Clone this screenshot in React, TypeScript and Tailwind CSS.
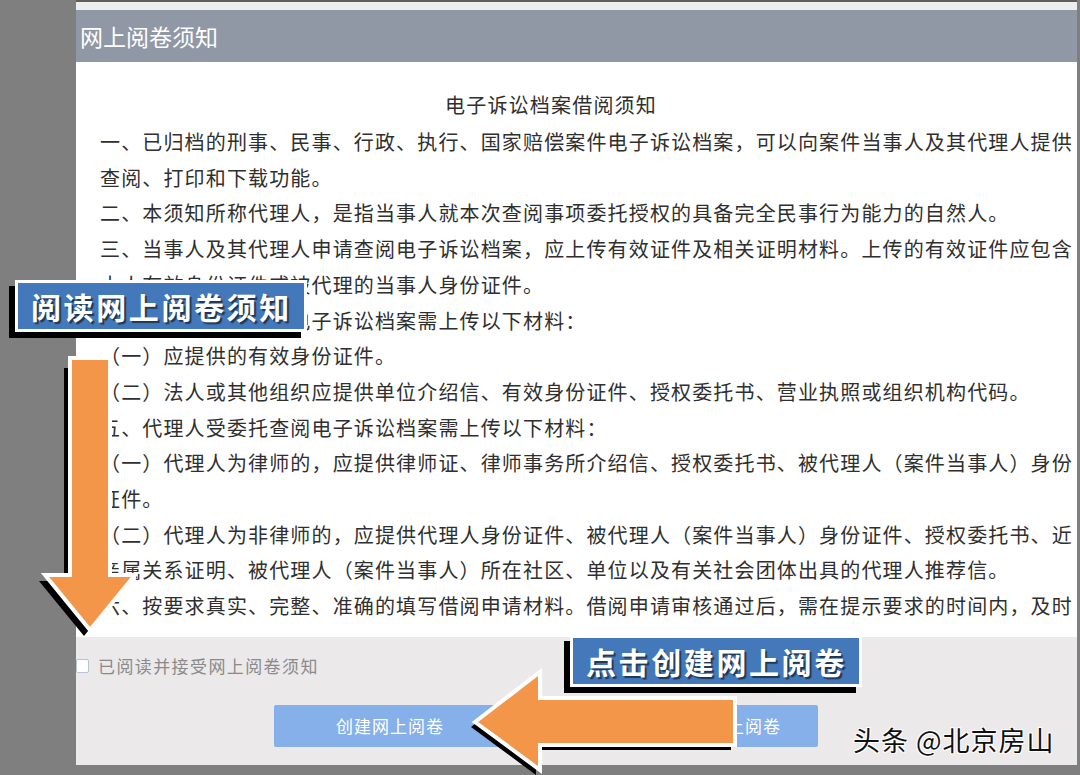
import React from "react";

const lines: string[] = [
  "一、已归档的刑事、民事、行政、执行、国家赔偿案件电子诉讼档案，可以向案件当事人及其代理人提供",
  "查阅、打印和下载功能。",
  "二、本须知所称代理人，是指当事人就本次查阅事项委托授权的具备完全民事行为能力的自然人。",
  "三、当事人及其代理人申请查阅电子诉讼档案，应上传有效证件及相关证明材料。上传的有效证件应包含",
  "本人有效身份证件或被代理的当事人身份证件。",
  "四、当事人申请查阅电子诉讼档案需上传以下材料：",
  "（一）应提供的有效身份证件。",
  "（二）法人或其他组织应提供单位介绍信、有效身份证件、授权委托书、营业执照或组织机构代码。",
  "五、代理人受委托查阅电子诉讼档案需上传以下材料：",
  "（一）代理人为律师的，应提供律师证、律师事务所介绍信、授权委托书、被代理人（案件当事人）身份",
  "证件。",
  "（二）代理人为非律师的，应提供代理人身份证件、被代理人（案件当事人）身份证件、授权委托书、近",
  "亲属关系证明、被代理人（案件当事人）所在社区、单位以及有关社会团体出具的代理人推荐信。",
  "六、按要求真实、完整、准确的填写借阅申请材料。借阅申请审核通过后，需在提示要求的时间内，及时",
];

const font = "font-['Microsoft_YaHei','Noto_Sans_CJK_SC',sans-serif]";

const Callout: React.FC<{ text: string; className: string }> = ({ text, className }) => (
  <div className={`absolute ${className}`}>
    <div className="border-[3px] border-white bg-[#4379bb] shadow-[-6px_6px_0_#000] pl-[13px] pr-[12px] py-[3px]">
      <span
        className={`${font} block whitespace-nowrap text-[30px] font-bold leading-[40px] tracking-[2.6px] text-white [text-shadow:2px_2px_1px_rgba(0,0,0,0.55)]`}
      >
        {text}
      </span>
    </div>
  </div>
);

const DownArrow = () => (
  <svg className="absolute left-[38px] top-[352px]" width="104" height="290" viewBox="0 0 104 290">
    <polygon
      points="26,10 66,10 66,223 91,223 46,278 1,223 26,223"
      fill="#000"
      transform="translate(0,6)"
    />
    <polygon
      points="32,6 72,6 72,223 97,223 52,278 7,223 32,223"
      fill="#f4964a"
      stroke="#fff"
      strokeWidth="4"
      strokeLinejoin="miter"
    />
  </svg>
);

const LeftArrow = () => (
  <svg className="absolute left-[463px] top-[664px]" width="282" height="111" viewBox="0 0 282 111">
    <polygon
      points="10,59 75,9 75,35 270,35 270,82 75,82 75,107"
      fill="#000"
      transform="translate(-2,4)"
    />
    <polygon
      points="12,58 77,8 77,34 272,34 272,81 77,81 77,106"
      fill="#f4964a"
      stroke="#fff"
      strokeWidth="4"
    />
  </svg>
);

export default function App() {
  return (
    <div className={`${font} relative h-[775px] w-[1080px] overflow-hidden bg-[#7f7f7f]`}>
      <div className="ml-[76px] flex h-[765px] w-[1001px] flex-col border-t-2 border-[#5e5e5e] bg-white">
        <div className="h-[8px] bg-[#eceeed]" />
        <div className="flex h-[52px] items-center bg-[#9098a6] pl-[4px]">
          <span className="text-[23px] text-white">网上阅卷须知</span>
        </div>
        <div className="flex-1 pl-[24px] pt-[24px] text-[#2f2f2f]">
          <div className="pl-[345px] whitespace-nowrap text-[20px] leading-[38px] tracking-[1.2px]">电子诉讼档案借阅须知</div>
          {lines.map((line, i) => (
            <div key={i} className="whitespace-nowrap text-[20px] leading-[35.7px] tracking-[1.15px]">
              {line}
            </div>
          ))}
        </div>
        <div className="flex h-[128px] flex-col bg-[#ebe9ea]">
          <div className="mt-[16px] flex items-center gap-[9px]">
            <span className="h-[14px] w-[13px] rounded-[2px] border border-[#b9c3d2] bg-white" />
            <span className="text-[17px] tracking-[1.4px] text-[#8a8a8a]">已阅读并接受网上阅卷须知</span>
          </div>
          <div className="mt-[26px] flex gap-[130px] pl-[198px]">
            <div className="flex h-[42px] w-[232px] items-center justify-center rounded-[2px] bg-[#85b0ea] text-[17px] tracking-[1px] text-white">
              创建网上阅卷
            </div>
            <div className="flex h-[42px] w-[182px] items-center justify-center rounded-[2px] bg-[#85b0ea] text-[17px] tracking-[1px] text-white">
              取消网上阅卷
            </div>
          </div>
        </div>
      </div>

      <Callout text="阅读网上阅卷须知" className="left-[15px] top-[280px]" />
      <DownArrow />
      <Callout text="点击创建网上阅卷" className="left-[570px] top-[635px]" />
      <LeftArrow />

      <div className="absolute left-[853px] top-[721px] whitespace-nowrap text-[27px] leading-[38px] tracking-[1px] text-[#111] [text-shadow:1px_1px_0_#fff,-1px_-1px_0_#fff,1px_-1px_0_#fff,-1px_1px_0_#fff]">
        头条 @北京房山
      </div>
    </div>
  );
}
